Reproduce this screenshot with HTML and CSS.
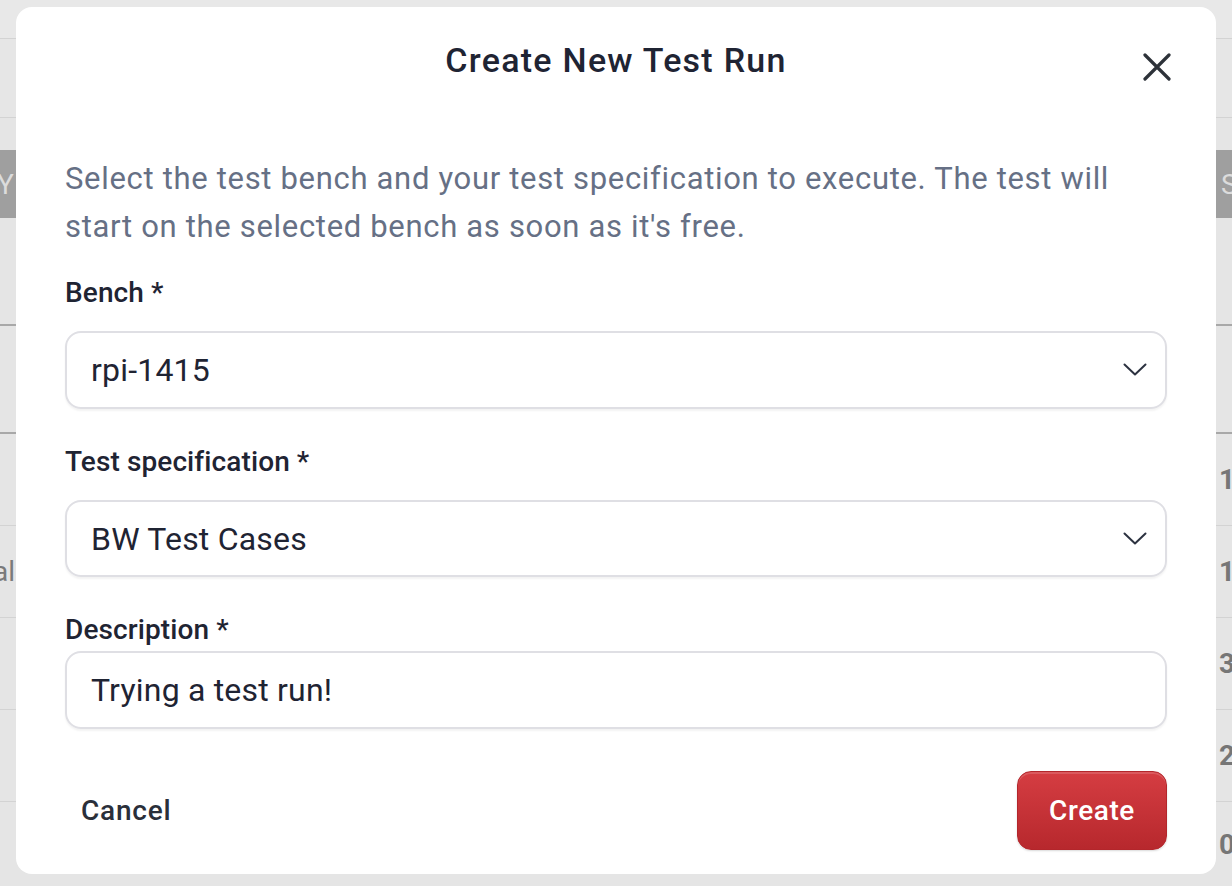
FILE: index.html
```html
<!DOCTYPE html>
<html lang="en">
<head>
<meta charset="utf-8">
<title>Create New Test Run</title>
<link rel="stylesheet" href="styles.css">
</head>
<body>
<div class="backdrop">
  <div class="row r1"></div>
  <div class="row r2"></div>
  <div class="row r3"></div>
  <div class="row head"><span class="cell-l">Y</span><span class="cell-r">S</span></div>
  <div class="row r5 strong"></div>
  <div class="row r6 strong"></div>
  <div class="row data"><span class="cell-l"></span><span class="cell-r num">1</span></div>
  <div class="row data"><span class="cell-l txt"><span>al</span></span><span class="cell-r num">1</span></div>
  <div class="row data"><span class="cell-l"></span><span class="cell-r num">3</span></div>
  <div class="row data"><span class="cell-l"></span><span class="cell-r num">2</span></div>
  <div class="row data last"><span class="cell-l"></span><span class="cell-r num">0</span></div>
</div>

<div class="modal" role="dialog" aria-labelledby="modal-title">
  <h2 class="modal-title" id="modal-title">Create New Test Run</h2>
  <button class="close-btn" aria-label="Close">
    <svg viewBox="0 0 28 28" width="28" height="28"><path d="M2 2 L26 26 M26 2 L2 26" stroke="#2d3239" stroke-width="3.2" stroke-linecap="round" fill="none"/></svg>
  </button>
  <p class="modal-desc">Select the test bench and your test specification to execute. The test will start on the selected bench as soon as it's free.</p>

  <label class="field-label first">Bench *</label>
  <div class="select-box">
    <span class="select-value">rpi-1415</span>
    <svg class="chevron" viewBox="0 0 24 13" width="24" height="13"><path d="M1.5 1.5 L12 11.5 L22.5 1.5" stroke="#2c3240" stroke-width="2" stroke-linecap="round" stroke-linejoin="round" fill="none"/></svg>
  </div>

  <label class="field-label">Test specification *</label>
  <div class="select-box">
    <span class="select-value">BW Test Cases</span>
    <svg class="chevron" viewBox="0 0 24 13" width="24" height="13"><path d="M1.5 1.5 L12 11.5 L22.5 1.5" stroke="#2c3240" stroke-width="2" stroke-linecap="round" stroke-linejoin="round" fill="none"/></svg>
  </div>

  <label class="field-label">Description *</label>
  <div class="input-box tight"><span class="select-value">Trying a test run!</span></div>

  <div class="modal-footer">
    <button class="btn-cancel">Cancel</button>
    <button class="btn-create">Create</button>
  </div>
</div>
</body>
</html>
```

FILE: styles.css
```css
* { box-sizing: border-box; }
html, body { margin: 0; padding: 0; }
body {
  width: 1232px;
  height: 886px;
  overflow: hidden;
  background: #e5e5e5;
  font-family: Roboto, "Liberation Sans", sans-serif;
  position: relative;
}

/* ---------- backdrop table ---------- */
.backdrop {
  display: flex;
  flex-direction: column;
  height: 886px;
}
.row {
  display: flex;
  justify-content: space-between;
  align-items: center;
  border-bottom: 1px solid #d3d3d3;
  font-size: 28px;
  overflow: hidden;
}
.r1 { height: 39px; background: #e8e8e8; }
.r2 { height: 79px; background: #e6e6e6; }
.r3 { height: 32px; border-bottom: none; }
.head { height: 68px; background: #9f9f9f; border-bottom: none; color: #dcdcdc; }
.r5 { height: 108px; }
.r6 { height: 108px; }
.strong { border-bottom: 2px solid #a8a8a8; }
.data { height: 92px; }
.last { height: 84px; border-bottom: none; }
.cell-l { margin-left: -4px; }
.cell-r { margin-right: -6px; width: 19px; }
.txt {
  color: #7a7a7a;
  margin-left: 0;
  width: 15px;
  overflow: hidden;
  display: flex;
  justify-content: flex-end;
  white-space: nowrap;
}
.num { color: #767676; font-weight: 700; }
.head .cell-l { margin-left: -3px; }
.head .cell-r { margin-right: -8px; }

/* ---------- modal ---------- */
.modal {
  position: absolute;
  left: 16px;
  top: 7px;
  width: 1200px;
  height: 867px;
  background: #ffffff;
  border-radius: 16px;
  padding: 33px 49px 24px 49px;
  display: flex;
  flex-direction: column;
}
.modal-title {
  margin: 0;
  text-align: center;
  font-size: 34px;
  line-height: 40px;
  font-weight: 500;
  letter-spacing: 1.25px;
  color: #1f2433;
}
.close-btn {
  position: absolute;
  top: 45px;
  left: 1126px;
  width: 30px;
  height: 30px;
  padding: 1px;
  border: none;
  background: none;
  display: flex;
  align-items: center;
  justify-content: center;
}
.modal-desc {
  margin: 75px 0 0;
  font-size: 31px;
  line-height: 48px;
  letter-spacing: 0.68px;
  color: #667085;
}
.field-label {
  display: block;
  margin-top: 35px;
  font-size: 28px;
  line-height: 36px;
  font-weight: 500;
  letter-spacing: 0.1px;
  color: #1f2433;
}
.field-label.first { margin-top: 24px; }
.select-box, .input-box {
  margin-top: 20px;
  height: 78px;
  border: 2px solid #dfdfe4;
  border-radius: 16px;
  box-shadow: 0 2px 2px rgba(0,0,0,0.05);
  display: flex;
  align-items: center;
  justify-content: space-between;
  padding: 0 18px 0 24px;
}
.input-box.tight { margin-top: 3px; }
.select-value {
  font-size: 32px;
  letter-spacing: 0.2px;
  color: #1f2433;
}
.chevron { display: block; }

.modal-footer {
  margin-top: 42px;
  display: flex;
  justify-content: space-between;
  align-items: center;
}
.btn-cancel {
  border: none;
  background: none;
  font-family: inherit;
  font-size: 28px;
  font-weight: 500;
  letter-spacing: 0.8px;
  color: #2a2f3a;
  padding: 0 0 0 16px;
  height: 78px;
}
.btn-create {
  width: 150px;
  height: 79px;
  border: 1px solid #b3262b;
  border-radius: 14px;
  background: linear-gradient(#d53d42, #b7282d);
  box-shadow: inset 0 2px 0 rgba(255,255,255,0.15), 0 1px 2px rgba(0,0,0,0.15);
  color: #ffffff;
  font-family: inherit;
  font-size: 28px;
  font-weight: 500;
  letter-spacing: 0.6px;
}
```
